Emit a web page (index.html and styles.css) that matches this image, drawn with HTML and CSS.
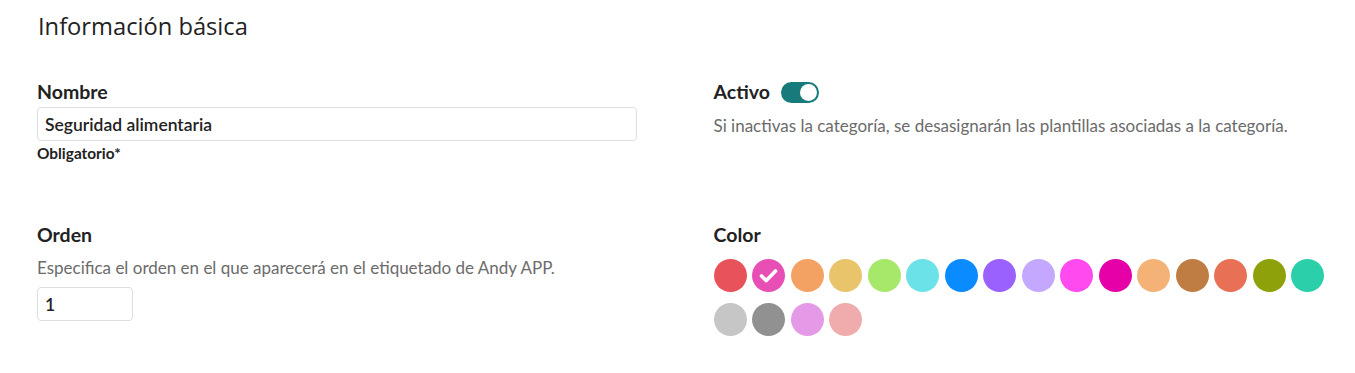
FILE: index.html
```html
<!DOCTYPE html>
<html lang="es">

<head>
  <meta charset="UTF-8">
  <meta name="viewport" content="width=device-width, initial-scale=1.0">
  <title>Información básica</title>
  <link rel="stylesheet" href="styles.css">
</head>

<body>
  <h2 class="title">Información básica</h2>

  <div class="form-grid">
    <div class="field">
      <label class="field-label" for="nombre">Nombre</label>
      <input class="text-input name-input" type="text" id="nombre" value="Seguridad alimentaria">
      <div class="required">Obligatorio*</div>
    </div>

    <div class="field">
      <div class="switch-row">
        <span class="field-label">Activo</span>
        <span class="switch is-on"><span class="knob"></span></span>
      </div>
      <p class="hint hint-active">Si inactivas la categoría, se desasignarán las plantillas asociadas a la categoría.</p>
    </div>

    <div class="field">
      <label class="field-label" for="orden">Orden</label>
      <p class="hint">Especifica el orden en el que aparecerá en el etiquetado de Andy APP.</p>
      <input class="text-input order-input" type="text" id="orden" value="1">
    </div>

    <div class="field">
      <span class="field-label">Color</span>
      <div class="swatches">
        <span class="swatch" style="background:#e8525a"></span>
        <span class="swatch selected" style="background:#e84fb5">
          <svg viewBox="0 0 33 33" width="33" height="33"><path d="M9.5 17l4.8 4.6 9.2-9.6" fill="none" stroke="#fff" stroke-width="3.6" stroke-linecap="round" stroke-linejoin="round"/></svg>
        </span>
        <span class="swatch" style="background:#f3a263"></span>
        <span class="swatch" style="background:#e9c46a"></span>
        <span class="swatch" style="background:#a5e86a"></span>
        <span class="swatch" style="background:#6be2e8"></span>
        <span class="swatch" style="background:#0a8bff"></span>
        <span class="swatch" style="background:#9b61ff"></span>
        <span class="swatch" style="background:#c4a8ff"></span>
        <span class="swatch" style="background:#ff4aef"></span>
        <span class="swatch" style="background:#e600a8"></span>
        <span class="swatch" style="background:#f5b276"></span>
        <span class="swatch" style="background:#bf7d43"></span>
        <span class="swatch" style="background:#e87055"></span>
        <span class="swatch" style="background:#8fa10a"></span>
        <span class="swatch" style="background:#2bcfa9"></span>
        <span class="swatch" style="background:#c6c6c6"></span>
        <span class="swatch" style="background:#919191"></span>
        <span class="swatch" style="background:#e59ae8"></span>
        <span class="swatch" style="background:#f0acac"></span>
      </div>
    </div>
  </div>
</body>

</html>
```

FILE: styles.css
```css
:root {
  --text-color: #222;
  --hint-color: #6b6b6b;
  --border-color: #dedede;
  --primary-color: #177a7b;
}

body {
  margin: 0;
  font-family: Lato, "Noto Sans", sans-serif;
  color: var(--text-color);
  background: #fff;
}

.title {
  margin: 10px 0 0 38px;
  font-family: "Open Sans", sans-serif;
  font-size: 23.7px;
  font-weight: 400;
  line-height: 32px;
  color: #222;
}

.form-grid {
  display: grid;
  grid-template-columns: 1fr 1fr;
  column-gap: 38px;
  row-gap: 62px;
  align-items: start;
  padding: 0 3px 0 37px;
  margin-top: 39px;
}

.field {
  display: flex;
  flex-direction: column;
  align-items: flex-start;
}

.field-label {
  font-size: 19.5px;
  font-weight: 700;
  line-height: 22px;
}

.text-input {
  box-sizing: border-box;
  height: 34px;
  padding: 0 7px;
  border: 1px solid var(--border-color);
  border-radius: 4px;
  font-family: inherit;
  font-size: 17.5px;
  font-weight: 600;
  color: var(--text-color);
  outline: none;
}

.name-input {
  width: 600px;
  margin-top: 4px;
}

.order-input {
  width: 96px;
  margin-top: 9px;
}

.required {
  margin-top: 3px;
  font-size: 15.4px;
  font-weight: 700;
  line-height: 18px;
}

.hint {
  margin: 12px 0 0;
  font-size: 17px;
  line-height: 20px;
  color: var(--hint-color);
}

.hint-active {
  margin-top: 13px;
}

.switch-row {
  display: flex;
  align-items: center;
  gap: 11px;
}

.switch {
  display: flex;
  align-items: center;
  justify-content: flex-end;
  box-sizing: border-box;
  width: 38px;
  height: 21px;
  padding: 0 2px;
  border-radius: 11px;
  background: var(--primary-color);
}

.knob {
  width: 17px;
  height: 17px;
  border-radius: 50%;
  background: #fff;
}

.swatches {
  display: flex;
  flex-wrap: wrap;
  column-gap: 5.5px;
  row-gap: 11px;
  margin-top: 13px;
}

.swatch {
  display: block;
  width: 33px;
  height: 33px;
  border-radius: 50%;
}

.swatch svg {
  display: block;
}
```
